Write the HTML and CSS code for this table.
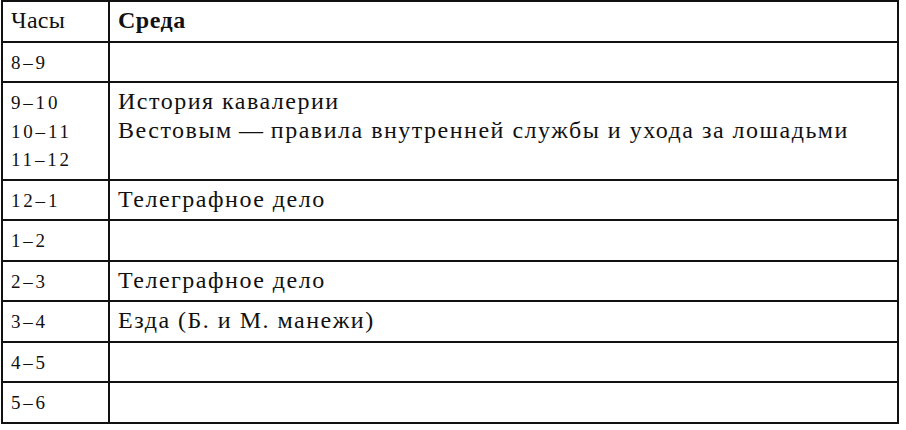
FILE: index.html
```html
<!DOCTYPE html>
<html lang="ru">
<head>
<meta charset="utf-8">
<title>Расписание — Среда</title>
<link rel="stylesheet" href="styles.css">
</head>
<body>
<table class="schedule">
  <colgroup>
    <col class="col-hours">
    <col class="col-day">
  </colgroup>
  <thead>
    <tr>
      <th class="hours-head">Часы</th>
      <th class="day-head">Среда</th>
    </tr>
  </thead>
  <tbody>
    <tr><td class="hours">8–9</td><td class="lesson"></td></tr>
    <tr>
      <td class="hours">9–10<br>10–11<br>11–12</td>
      <td class="lesson">История кавалерии<br>Вестовым&#8201;—&#8201;правила внутренней службы и ухода за лошадьми</td>
    </tr>
    <tr><td class="hours">12–1</td><td class="lesson">Телеграфное дело</td></tr>
    <tr><td class="hours">1–2</td><td class="lesson"></td></tr>
    <tr><td class="hours">2–3</td><td class="lesson">Телеграфное дело</td></tr>
    <tr><td class="hours">3–4</td><td class="lesson">Езда (Б. и М. манежи)</td></tr>
    <tr><td class="hours">4–5</td><td class="lesson"></td></tr>
    <tr><td class="hours">5–6</td><td class="lesson"></td></tr>
  </tbody>
</table>
</body>
</html>
```

FILE: styles.css
```css
html, body {
  margin: 0;
  padding: 0;
  background: #ffffff;
}

body {
  padding: 0 0 0 1px;
  color: #111111;
}

.schedule,
.schedule th,
.schedule td {
  font-family: "Liberation Serif", "Times New Roman", serif;
}

.schedule {
  border-collapse: collapse;
  width: 898px;
  table-layout: fixed;
  font-size: 24px;
  line-height: 28.5px;
}

.col-hours {
  width: 107px;
}

.schedule th,
.schedule td {
  border: 2px solid #111111;
  padding: 4px 8px 6px;
  text-align: left;
  vertical-align: top;
  height: 28.5px;
}

.hours-head {
  font-weight: normal;
  letter-spacing: 0.3px;
  padding-left: 7px;
}

.day-head {
  font-weight: bold;
  letter-spacing: 0.5px;
}

.schedule td.hours {
  font-size: 19px;
  letter-spacing: 2.8px;
  padding-top: 6px;
  padding-bottom: 4px;
}

.lesson {
  letter-spacing: 1.5px;
}
```
